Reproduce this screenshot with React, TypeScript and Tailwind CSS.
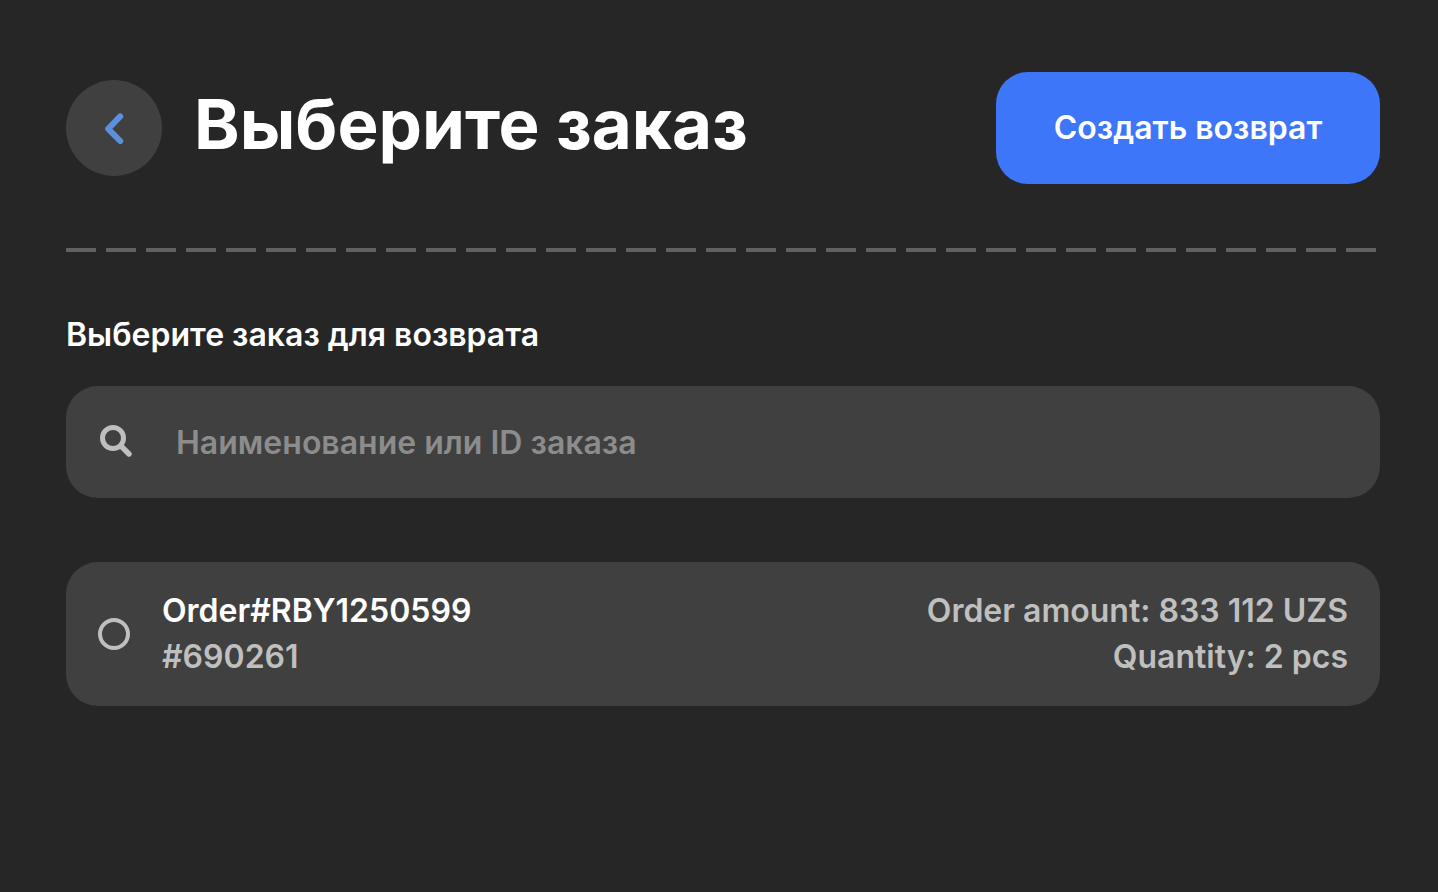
const orders = [
  { id: "690261", name: "Order#RBY1250599", amount: "833 112 UZS", quantity: "2 pcs" },
];

function ChevronIcon() {
  return (
    <svg viewBox="0 0 32 32" className="size-8" fill="none" stroke="currentColor" aria-hidden="true">
      <path d="M22.2 4.2 10.2 16.6l12 12.2" strokeWidth="6" strokeLinecap="round" strokeLinejoin="round" transform="translate(0 0.2)" />
    </svg>
  );
}

function SearchIcon() {
  return (
    <svg viewBox="0 0 32 32" className="mb-0.5 size-8 shrink-0 text-[#bfbfbf]" fill="none" stroke="currentColor" aria-hidden="true">
      <circle cx="13" cy="13" r="10.5" strokeWidth="5" />
      <path d="m21 21 8 8" strokeWidth="5.4" strokeLinecap="round" />
    </svg>
  );
}

export default function App() {
  return (
    <main className="min-h-screen bg-[#262626] pt-[72px] pr-[58px] pb-16 pl-[66px] font-[Inter,sans-serif] text-[32px] leading-[46px] font-semibold text-white">
      <header className="flex items-center justify-between">
        <div className="flex items-center gap-8">
          <button type="button" aria-label="Назад" className="flex size-24 items-center justify-center rounded-full bg-[#404040] text-[#5b91dc]">
            <ChevronIcon />
          </button>
          <h1 className="pb-2 text-[69px] leading-[88px] font-bold">Выберите заказ</h1>
        </div>
        <button type="button" className="h-28 w-96 rounded-[32px] bg-[#3d76f8]">Создать возврат</button>
      </header>
      <div className="mt-16 h-1 bg-[repeating-linear-gradient(90deg,#616161_0_30px,transparent_30px_40px)]" />
      <label htmlFor="search" className="mt-[60px] block">Выберите заказ для возврата</label>
      <div className="mt-7 flex h-28 items-center gap-11 rounded-[32px] bg-[#404040] px-[34px]">
        <SearchIcon />
        <input id="search" type="search" placeholder="Наименование или ID заказа" className="h-full min-w-0 flex-1 bg-transparent outline-none placeholder:text-[#8c8c8c]" />
      </div>
      <div className="mt-16">
        {orders.map((o) => (
          <label key={o.id} className="flex h-36 items-center gap-8 rounded-[32px] bg-[#404040] px-8 text-[#bfbfbf]">
            <input type="radio" name="order" value={o.id} className="size-8 appearance-none rounded-full border-4 border-[#bfbfbf] checked:bg-[#3d76f8]" />
            <span className="flex flex-1 flex-col">
              <span className="text-white">{o.name}</span>
              <span>#{o.id}</span>
            </span>
            <span className="flex flex-col text-right">
              <span>Order amount: {o.amount}</span>
              <span>Quantity: {o.quantity}</span>
            </span>
          </label>
        ))}
      </div>
    </main>
  );
}
